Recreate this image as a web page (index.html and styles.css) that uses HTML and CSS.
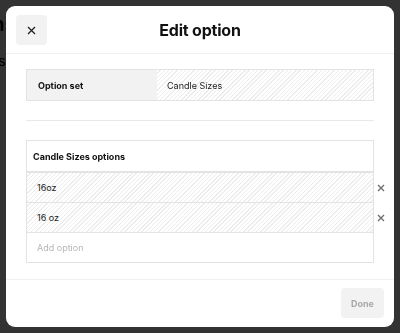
FILE: index.html
```html
<!DOCTYPE html>
<html>
<head>
<meta charset="utf-8">
<link rel="stylesheet" href="styles.css">
</head>
<body>
<div class="page">
  <div class="page-title">Options</div>
  <div class="page-line">Variations</div>
  <div class="page-line small">Candle</div>
  <div class="page-foot">Your</div>
</div>
<div class="overlay">
  <div class="modal">
    <header class="modal-head">
      <button class="close-btn" aria-label="Close">
        <svg width="9" height="9" viewBox="0 0 9 9"><path d="M1 1L8 8M8 1L1 8" stroke="#222" stroke-width="1.3" fill="none"/></svg>
      </button>
      <h1 class="modal-title">Edit option</h1>
    </header>
    <main class="modal-body">
      <div class="set-row">
        <div class="set-label">Option set</div>
        <div class="set-value striped">Candle Sizes</div>
      </div>
      <hr class="divider">
      <div class="opt-table">
        <div class="opt-head">Candle Sizes options</div>
        <div class="opt-row striped">
          <span>16oz</span>
          <button class="del-btn" aria-label="Remove"><svg width="8" height="8" viewBox="0 0 8 8"><path d="M1 1L7 7M7 1L1 7" stroke="#707070" stroke-width="1.4" fill="none"/></svg></button>
        </div>
        <div class="opt-row striped">
          <span>16 oz</span>
          <button class="del-btn" aria-label="Remove"><svg width="8" height="8" viewBox="0 0 8 8"><path d="M1 1L7 7M7 1L1 7" stroke="#707070" stroke-width="1.4" fill="none"/></svg></button>
        </div>
        <div class="opt-row add">Add option</div>
      </div>
    </main>
    <footer class="modal-foot">
      <button class="done-btn">Done</button>
    </footer>
  </div>
</div>
</body>
</html>
```
FILE: styles.css
```css
* { box-sizing: border-box; }
html, body { margin: 0; height: 100%; }
body {
  font-family: Inter, "Noto Sans", sans-serif;
  background: #fff;
  color: #000;
  overflow: hidden;
}
.page { padding-top: 12px; margin-left: -60px; }
.page-title { font-size: 20px; font-weight: 600; line-height: 24px; }
.page-line { font-size: 14px; margin-top: 16px; line-height: 18px; }
.page-line.small { font-size: 13px; margin-top: 0; }
.page-foot { font-size: 14px; margin-top: 204px; }
.overlay {
  position: fixed;
  inset: 0;
  background: rgba(0, 0, 0, 0.8);
  padding: 6px;
}
.modal {
  width: 388px;
  height: 321px;
  background: #fff;
  border-radius: 9px;
  display: flex;
  flex-direction: column;
}
.modal-head {
  height: 48px;
  border-bottom: 1px solid #f0f0f0;
  display: flex;
  align-items: flex-start;
  padding: 9px 10px 0;
}
.close-btn {
  width: 31px;
  height: 30px;
  border: 0;
  border-radius: 4px;
  background: #f2f2f2;
  display: flex;
  align-items: center;
  justify-content: center;
  padding: 0;
}
.modal-title {
  margin: 0 31px 0 0;
  flex: 1;
  text-align: center;
  font-size: 16px;
  font-weight: 700;
  line-height: 30px;
  letter-spacing: -0.2px;
  color: #111;
}
.modal-body {
  flex: 1;
  padding: 15px 20px 0;
  border-bottom: 1px solid #f2f2f2;
}
.striped {
  background: repeating-linear-gradient(135deg, #fff 0 2px, #ededed 2px 3px);
}
.set-row {
  display: flex;
  height: 32px;
  border: 1px solid #e3e3e3;
  font-size: 9px;
}
.set-label {
  width: 130px;
  background: #f2f2f2;
  font-weight: 700;
  padding-left: 11px;
  display: flex;
  align-items: center;
  color: #111;
}
.set-value {
  flex: 1;
  padding-left: 10px;
  display: flex;
  align-items: center;
  color: #222;
}
.divider {
  border: 0;
  border-top: 1px solid #e8e8e8;
  margin: 19px 0;
}
.opt-table {
  border: 1px solid #e3e3e3;
  border-bottom: 0;
  font-size: 9px;
}
.opt-head {
  height: 32px;
  display: flex;
  align-items: center;
  padding-left: 6px;
  font-weight: 700;
  color: #111;
  border-bottom: 2px solid #e3e3e3;
}
.opt-row {
  height: 30px;
  display: flex;
  align-items: center;
  padding-left: 10px;
  border-bottom: 1px solid #e3e3e3;
  position: relative;
  color: #222;
}
.opt-row.add { color: #b5b5b5; }
.del-btn {
  position: absolute;
  right: -12px;
  top: 11px;
  width: 8px;
  height: 8px;
  padding: 0;
  border: 0;
  background: none;
  display: flex;
}
.modal-foot {
  height: 47px;
  display: flex;
  justify-content: flex-end;
  padding: 8px 10px 0;
}
.done-btn {
  width: 43px;
  height: 30px;
  border: 0;
  border-radius: 4px;
  background: #f2f2f2;
  color: #a8a8a8;
  font-family: inherit;
  font-weight: 700;
  font-size: 9px;
  padding: 0;
}
```
